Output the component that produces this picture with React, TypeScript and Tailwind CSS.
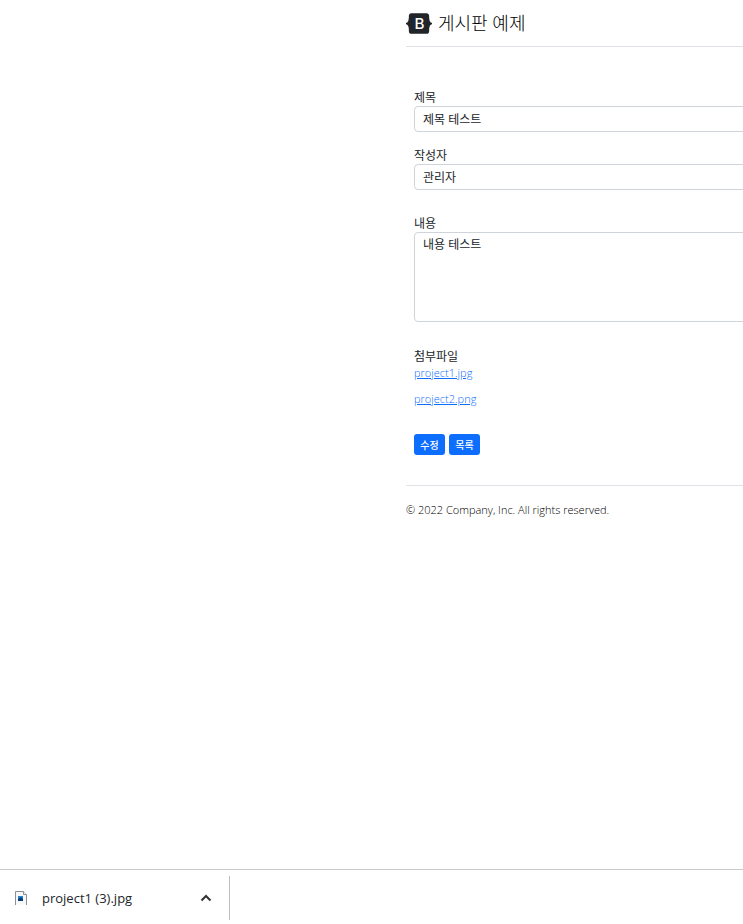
import type { ReactNode } from "react";

const attachments = ["project1.jpg", "project2.png"];

function BootstrapLogo() {
  return (
    <svg className="h-[21px] w-[26px] shrink-0" viewBox="0 0 118 94" role="img" aria-label="Bootstrap">
      <path
        fill="#212529"
        d="M24.509 0c-6.733 0-11.715 5.893-11.492 12.284.214 6.14-.064 14.092-2.066 20.577C8.943 39.365 5.547 43.485 0 44.014v5.972c5.547.529 8.943 4.649 10.951 11.153 2.002 6.485 2.28 14.437 2.066 20.577C12.794 88.106 17.776 94 24.51 94H93.5c6.733 0 11.714-5.893 11.491-12.284-.214-6.14.064-14.092 2.066-20.577 2.009-6.504 5.396-10.624 10.943-11.153v-5.972c-5.547-.529-8.934-4.649-10.943-11.153-2.002-6.484-2.28-14.437-2.066-20.577C105.214 5.894 100.233 0 93.5 0H24.508z"
      />
      <text x="61" y="72" textAnchor="middle" fill="#fff" fontSize="69" fontWeight="500" fontFamily="Inter, sans-serif">
        B
      </text>
    </svg>
  );
}

function ImageFileIcon() {
  return (
    <svg className="h-4 w-3 shrink-0" viewBox="0 0 12 16" aria-hidden="true">
      <path d="M.5 14.5V1.5h8l3 3v10z" fill="#f6f7f9" />
      <path d="M.5 15V1.5h8l3 3V15" fill="none" stroke="#8d8f92" />
      <path d="M8.5 1.5v3h3" fill="#fff" stroke="#8d8f92" />
      <path d="M3 6h5v5H3z" fill="#2386d1" />
      <path d="M3 11V9l3-2 2 2v2z" fill="#0b3d78" />
    </svg>
  );
}

function Button({ children }: { children: ReactNode }) {
  return (
    <button type="button" className="h-[21px] w-[31px] rounded-[3px] bg-[#0d6efd] text-[10px] leading-4 font-medium text-white">
      {children}
    </button>
  );
}

export default function App() {
  const field = "block w-full rounded-[4px] border border-[#ced4da] bg-white px-2 py-1 leading-4 outline-none";

  return (
    <div className="flex min-h-screen flex-col overflow-x-hidden bg-white pb-1 font-['Open_Sans','Noto_Sans_CJK_KR',sans-serif] text-[#212529]">
      <div className="flex-1 pl-[406px] text-[12px] leading-4">
        <header className="flex h-[47px] items-center border-b border-[#dee2e6]">
          <a href="#" className="flex items-center gap-1.5">
            <BootstrapLogo />
            <span className="text-[18px] leading-6 font-light text-black">게시판 예제</span>
          </a>
        </header>

        {/* fields run past the right edge of the window */}
        <main className="-mr-4 pt-[43px] pl-2">
          <form>
            <label htmlFor="title" className="block">제목</label>
            <input id="title" type="text" defaultValue="제목 테스트" className={`${field} h-[26px]`} />

            <label htmlFor="writer" className="mt-4 block">작성자</label>
            <input id="writer" type="text" defaultValue="관리자" className={`${field} h-[26px]`} />

            <label htmlFor="content" className="mt-[26px] block">내용</label>
            <textarea id="content" defaultValue="내용 테스트" className={`${field} h-[90px] resize-none`} />

            <p className="mt-[27px]">첨부파일</p>
            <ul className="space-y-2.5 text-[11px] font-light">
              {attachments.map((name) => (
                <li key={name}>
                  <a href="#" className="text-[#0d6efd] underline">{name}</a>
                </li>
              ))}
            </ul>

            <div className="mt-[27px] flex gap-1">
              <Button>수정</Button>
              <Button>목록</Button>
            </div>
          </form>
        </main>

        <footer className="mt-[30px] border-t border-[#dee2e6] pt-4 text-[11px] font-light text-black">
          © 2022 Company, Inc. All rights reserved.
        </footer>
      </div>

      {/* download shelf */}
      <div className="flex h-[51px] border-t border-[#c8c8c8] pt-1.5">
        <div className="flex w-[230px] items-center border-r border-[#bdbdbd] pr-[17px] pl-[15px]">
          <ImageFileIcon />
          <a href="#" className="ml-[15px] flex-1 text-[13px] leading-5">project1 (3).jpg</a>
          <button type="button" aria-label="More options">
            <svg className="h-3 w-3" viewBox="0 0 12 12" fill="none" stroke="#333" strokeWidth="2">
              <path d="M1.5 8.5 6 4l4.5 4.5" />
            </svg>
          </button>
        </div>
      </div>
    </div>
  );
}
